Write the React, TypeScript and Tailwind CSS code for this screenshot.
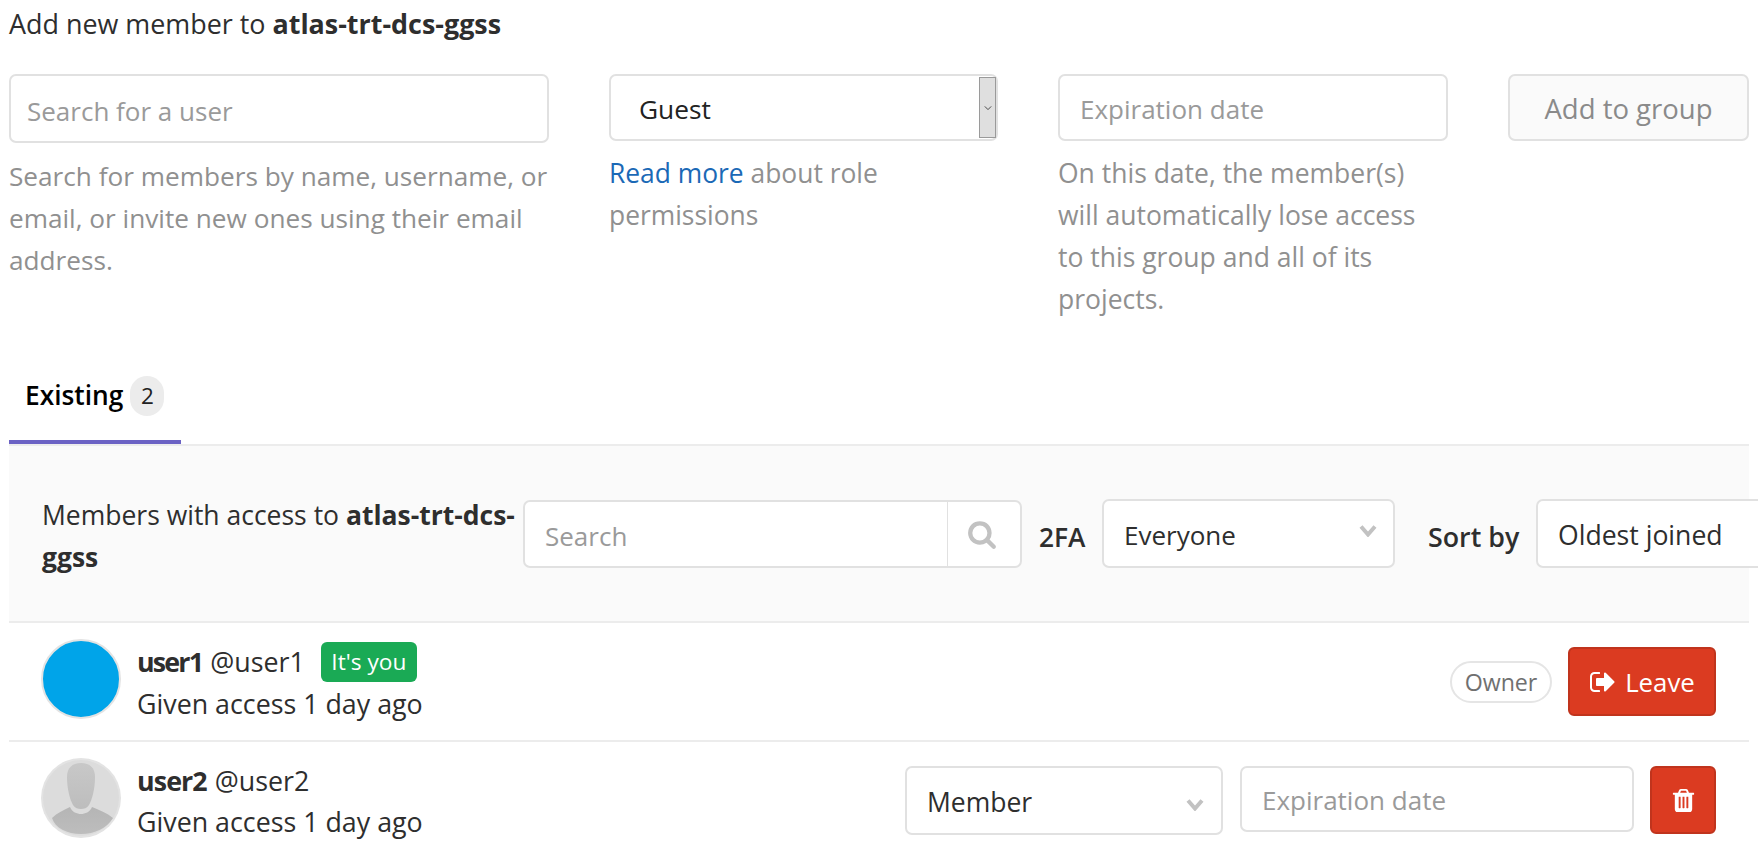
const SIGN_OUT = "M704 1440q0 4 1 20t.5 26.5-3 23.5-10 19.5-20.5 6.5h-320q-119 0-203.5-84.5t-84.5-203.5v-704q0-119 84.5-203.5t203.500-84.500h320q13 0 22.500 9.500t9.500 22.500q0 4 1 20t.5 26.500-3 23.500-10 19.500-20.500 6.500h-320q-66 0-113 47t-47 113v704q0 66 47 113t113 47h312q13 0 22.500 9.500t9.500 22.500zm928-544q0 26-19 45l-544 544q-19 19-45 19t-45-19-19-45v-288h-448q-26 0-45-19t-19-45v-384q0-26 19-45t45-19h448v-288q0-26 19-45t45-19 45 19l544 544q19 19 19 45z";
const TRASH = "M704 1376v-704q0-14-9-23t-23-9h-64q-14 0-23 9t-9 23v704q0 14 9 23t23 9h64q14 0 23-9t9-23zm256 0v-704q0-14-9-23t-23-9h-64q-14 0-23 9t-9 23v704q0 14 9 23t23 9h64q14 0 23-9t9-23zm256 0v-704q0-14-9-23t-23-9h-64q-14 0-23 9t-9 23v704q0 14 9 23t23 9h64q14 0 23-9t9-23zm-544-992h448l-48-117q-7-9-17-11h-317q-10 2-17 11zm928 32v64q0 14-9 23t-23 9h-96v948q0 83-47 143.500t-113 60.500h-832q-66 0-113-58.500t-47-141.500v-952h-96q-14 0-23-9t-9-23v-64q0-14 9-23t23-9h309l70-167q15-37 54-63t79-26h320q40 0 79 26t54 63l70 167h309q14 0 23 9t9 23z";
const SEARCH = "M1216 832q0-185-131.500-316.500t-316.500-131.500-316.500 131.500-131.500 316.500 131.500 316.500 316.500 131.500 316.500-131.500 131.500-316.500zm512 832q0 52-38 90t-90 38q-54 0-90-38l-343-342q-179 124-399 124-143 0-273.500-55.500t-225-150-150-225-55.500-273.500 55.500-273.500 150-225 225-150 273.500-55.500 273.500 55.500 225 150 150 225 55.500 273.500q0 220-124 399l343 343q37 37 37 90z";

function Fa({ d, className }: { d: string; className: string }) {
  return (
    <svg viewBox="0 0 1792 1792" className={className} fill="currentColor" aria-hidden="true">
      <path d={d} />
    </svg>
  );
}

function Chevron({ className }: { className?: string }) {
  return (
    <svg viewBox="0 0 18 12" className={`h-[12px] w-[18px] ${className ?? ""}`} fill="none" stroke="#c2c2c2" strokeWidth="4" aria-hidden="true">
      <path d="M2 1.500 L9 9.500 L16 1.500" />
    </svg>
  );
}

function DefaultAvatar() {
  return (
    <svg viewBox="0 0 80 80" className="h-[80px] w-[80px] shrink-0" aria-hidden="true">
      <defs>
        <linearGradient id="headGrad" x1="0" y1="0" x2="0" y2="1">
          <stop offset="0" stopColor="#c8c8c8" />
          <stop offset="1" stopColor="#bdbdbd" />
        </linearGradient>
        <linearGradient id="bodyGrad" x1="0" y1="0" x2="0" y2="1">
          <stop offset="0" stopColor="#b5b5b5" />
          <stop offset="1" stopColor="#bdbdbd" />
        </linearGradient>
      </defs>
      <circle cx="40" cy="40" r="40" fill="#e3e3e3" />
      <circle cx="40" cy="40" r="38" fill="#dcdcdc" />
      <path d="M40 5 C31 5 26 10 26 19 C26 31 29 42 32 47 C34 50 37 51 40 51 C43 51 46 50 48 47 C51 42 54 31 54 19 C54 10 49 5 40 5 Z" fill="url(#headGrad)" />
      <path d="M29 49 C31 54 36 56 40 56 C44 56 49 54 51 49 C58 52 66 55 72 60 C66 70 54 76 40 76 C26 76 14 70 11 60 C16 55 23 52 29 49 Z" fill="url(#bodyGrad)" />
    </svg>
  );
}

export default function App() {
  return (
    <div className="h-[851px] w-[1758px] overflow-hidden bg-white px-[9px] font-['Open_Sans',sans-serif] text-[26.8px] leading-[42px] text-[#2e2e2e]">
      <div className="flex h-[74px] items-start pt-[3px] text-[26.900px]">
        Add new member to&nbsp;<strong className="font-bold">atlas-trt-dcs-ggss</strong>
      </div>

      <div className="grid h-[308px] grid-cols-[540px_389px_390px_241px] justify-between">
        <div>
          <input
            placeholder="Search for a user"
            className="h-[69px] w-full rounded-[7px] border-2 border-[#e1e1e1] bg-white px-[16px] pt-[4px] text-[26px] outline-none placeholder:text-[#9a9a9a]"
          />
          <p className="mt-[12px] text-[26.200px] text-[#909090]">Search for members by name, username, or email, or invite new ones using their email address.</p>
        </div>
        <div>
          <div className="flex h-[67px] items-center justify-between rounded-[7px] border-2 border-[#e1e1e1] bg-white pl-[28px] text-[26.300px] text-[#222222]">
            <span className="pt-[3px]">Guest</span>
            <span className="flex h-[61px] w-[17px] items-center justify-center border border-[#9a9a9a] bg-[#dfdfdf]">
              <svg viewBox="0 0 10 6" className="h-[6px] w-[8px]" fill="none" stroke="#444444" strokeWidth="1.200" aria-hidden="true">
                <path d="M1 1 L5 5 L9 1" />
              </svg>
            </span>
          </div>
          <p className="mt-[11px] text-[26.400px] text-[#909090]">
            <a className="text-[#1b69b6]">Read more</a> about role permissions
          </p>
        </div>
        <div>
          <input
            placeholder="Expiration date"
            className="h-[67px] w-full rounded-[7px] border-2 border-[#e1e1e1] bg-white px-[20px] pt-[3px] text-[26px] outline-none placeholder:text-[#9a9a9a]"
          />
          <p className="mt-[11px] w-[372px] text-[26.500px] text-[#909090]">On this date, the member(s) will automatically lose access to this group and all of its projects.</p>
        </div>
        <div>
          <button className="h-[67px] w-full rounded-[7px] border-2 border-[#e1e1e1] bg-[#fafafa] pt-[3px] text-[27.500px] text-[#8a8a8a]">Add to group</button>
        </div>
      </div>

      <div className="flex h-[64px] border-b-2 border-[#ececec]">
        <div className="-mt-[6px] flex h-[68px] w-[172px] items-start gap-[7px] border-b-4 border-[#6b62c4] pl-[16px]">
          <span className="-mt-[2px] text-[26.300px] font-semibold text-black">Existing</span>
          <span className="flex h-[40px] w-[34px] items-center justify-center rounded-full bg-[#ececec] text-[22.500px] font-medium text-[#222222]">2</span>
        </div>
      </div>

      <div className="flex h-[177px] items-start border-b-2 border-[#ececec] bg-[#fafafa] pl-[33px] pt-[54px]">
        <div className="w-[481px] shrink-0 -mt-[6px] text-[26.500px]">
          Members with access to <strong className="font-bold">atlas-trt-dcs-ggss</strong>
        </div>
        <div className="flex h-[68px] w-[499px] shrink-0 rounded-[7px] border-2 border-[#e1e1e1] bg-white">
          <input placeholder="Search" className="min-w-0 flex-1 bg-transparent px-[20px] pt-[3px] text-[26px] outline-none placeholder:text-[#9a9a9a]" />
          <span className="flex w-[73px] items-center justify-center border-l border-[#e1e1e1] pr-[4px]">
            <Fa d={SEARCH} className="h-[30px] w-[30px] text-[#c2c2c2]" />
          </span>
        </div>
        <span className="ml-[17px] mt-[16px] w-[63px] shrink-0 whitespace-nowrap text-[26.300px] font-semibold">2FA</span>
        <div className="-mt-[1px] flex h-[69px] w-[293px] shrink-0 items-center justify-between rounded-[7px] border-2 border-[#e1e1e1] bg-white pl-[20px] pr-[16px]">
          <span className="pt-[3px] text-[26px]">Everyone</span>
          <Chevron className="-mt-[6px]" />
        </div>
        <span className="ml-[33px] mt-[16px] w-[108px] shrink-0 whitespace-nowrap font-semibold">Sort by</span>
        <div className="-mt-[1px] flex h-[69px] w-[300px] shrink-0 items-center rounded-[7px] border-2 border-[#e1e1e1] bg-white pl-[20px]">
          <span className="pt-[3px] text-[26.600px]">Oldest joined</span>
        </div>
      </div>

      <div className="flex h-[119px] items-start border-b-2 border-[#ececec] pl-[32px] pr-[33px] pt-[16px]">
        <div className="h-[80px] w-[80px] shrink-0 rounded-full border-2 border-[#e3e3e3] bg-[#00a4e9]" />
        <div className="ml-[16px] mt-[2px]">
          <div className="flex h-[42px] items-center">
            <strong className="font-bold tracking-[-1.800px]">user1</strong>
            <span className="ml-[8px]">@user1</span>
            <span className="ml-[16px] flex h-[40px] w-[96px] items-center justify-center rounded-[6px] bg-[#1aaa55] text-[22.700px] text-white">It's you</span>
          </div>
          <div>Given access 1 day ago</div>
        </div>
        <div className="ml-auto mt-[8px] flex items-center">
          <span className="flex h-[42px] w-[102px] items-center justify-center rounded-full border-2 border-[#e5e5e5] text-[23.200px] text-[#707070]">Owner</span>
          <button className="ml-[16px] flex h-[69px] w-[148px] items-center justify-center gap-[8px] rounded-[6px] border-2 border-[#c0341d] bg-[#db3b21] text-[25.800px] text-white">
            <Fa d={SIGN_OUT} className="h-[28px] w-[28px]" />
            Leave
          </button>
        </div>
      </div>

      <div className="flex h-[108px] items-start pl-[32px] pr-[33px] pt-[16px]">
        <DefaultAvatar />
        <div className="ml-[16px] mt-[2px]">
          <div className="flex h-[42px] items-center">
            <strong className="font-bold tracking-[-0.900px]">user2</strong>
            <span className="ml-[8px]">@user2</span>
          </div>
          <div className="-mt-[1px]">Given access 1 day ago</div>
        </div>
        <div className="ml-auto mt-[8px] flex items-start">
          <div className="flex h-[69px] w-[318px] items-center justify-between rounded-[7px] border-2 border-[#e1e1e1] bg-white pl-[20px] pr-[17px]">
            <span className="pt-[3px] text-[26.500px]">Member</span>
            <Chevron className="mt-[8px]" />
          </div>
          <input
            placeholder="Expiration date"
            className="ml-[17px] h-[66px] w-[394px] rounded-[7px] border-2 border-[#e1e1e1] bg-white px-[20px] pt-[2px] text-[26px] outline-none placeholder:text-[#9a9a9a]"
          />
          <button className="ml-[16px] flex h-[68px] w-[66px] items-center justify-center rounded-[6px] border-2 border-[#c0341d] bg-[#db3b21] text-white">
            <Fa d={TRASH} className="h-[27px] w-[27px]" />
          </button>
        </div>
      </div>
    </div>
  );
}
